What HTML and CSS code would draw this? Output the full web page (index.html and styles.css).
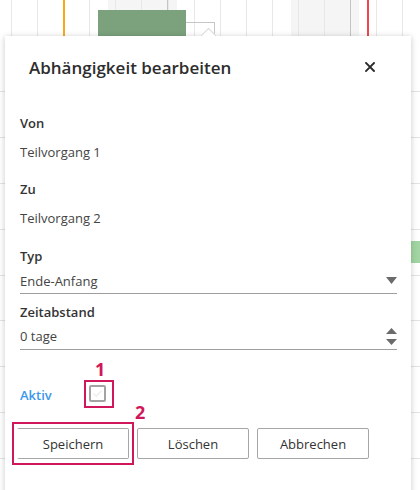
FILE: index.html
```html
<!DOCTYPE html>
<html lang="de">
<head>
<meta charset="utf-8">
<title>Abhängigkeit bearbeiten</title>
<link rel="stylesheet" href="styles.css">
</head>
<body>
<div class="gantt">
  <div class="gantt-band band-a"></div>
  <div class="gantt-band band-b"></div>
  <div class="gantt-cols">
    <i></i><i></i><i></i><i></i><i></i><i></i><i></i><i></i><i></i><i></i><i></i><i></i><i></i><i></i><i></i><i></i><i></i><i></i>
  </div>
  <div class="gantt-rows">
    <i></i><i></i><i></i><i></i><i></i><i></i><i></i><i></i><i></i><i></i>
  </div>
  <div class="gantt-sep sep-a"></div>
  <div class="gantt-sep sep-b"></div>
  <div class="gantt-marker marker-start"></div>
  <div class="gantt-marker marker-end"></div>
  <div class="gantt-bar bar-summary"></div>
  <div class="gantt-bar bar-task"></div>
  <div class="gantt-link link-h"></div>
  <div class="gantt-link link-v"></div>

  <div class="dialog">
    <span class="dialog-pointer"></span>
    <header class="dialog-header">
      <h2 class="dialog-title">Abhängigkeit bearbeiten</h2>
      <button class="dialog-close" type="button" aria-label="Schließen">
        <svg width="10" height="10" viewBox="0 0 10 10"><path d="M1 1L9 9M9 1L1 9" stroke="#2b2b2b" stroke-width="1.9" stroke-linecap="square"/></svg>
      </button>
    </header>
    <div class="dialog-body">
      <div class="field">
        <div class="field-label">Von</div>
        <div class="field-text">Teilvorgang 1</div>
      </div>
      <div class="field field-gap">
        <div class="field-label">Zu</div>
        <div class="field-text">Teilvorgang 2</div>
      </div>
      <div class="field field-gap-l">
        <div class="field-label">Typ</div>
        <div class="field-input field-input-select">
          <span>Ende-Anfang</span>
          <svg class="select-arrow" width="11" height="7" viewBox="0 0 11 7"><path d="M0 0H11L5.5 7Z" fill="#6b6b6b"/></svg>
        </div>
      </div>
      <div class="field field-gap-s">
        <div class="field-label">Zeitabstand</div>
        <div class="field-input field-input-number">
          <span>0 tage</span>
          <span class="spinner">
            <svg width="11" height="6" viewBox="0 0 11 6"><path d="M0 6H11L5.5 0Z" fill="#6b6b6b"/></svg>
            <svg width="11" height="6" viewBox="0 0 11 6"><path d="M0 0H11L5.5 6Z" fill="#6b6b6b"/></svg>
          </span>
        </div>
      </div>
      <div class="check-row">
        <span class="check-label">Aktiv</span>
        <span class="checkbox">
          <svg width="13" height="13" viewBox="0 0 13 13"><path d="M2.5 6.5L5.2 9.2L10.5 3.8" fill="none" stroke="#eeeeee" stroke-width="1.5"/></svg>
        </span>
      </div>
      <div class="actions">
        <button class="btn btn-save" type="button">Speichern</button>
        <button class="btn" type="button">Löschen</button>
        <button class="btn" type="button">Abbrechen</button>
      </div>
    </div>
    <span class="callout-box callout-box-1"></span>
    <span class="callout-num callout-num-1">1</span>
    <span class="callout-box callout-box-2"></span>
    <span class="callout-num callout-num-2">2</span>
  </div>
</div>
</body>
</html>
```

FILE: styles.css
```css
* { box-sizing: border-box; }

html, body {
  margin: 0;
  padding: 0;
}

body {
  width: 420px;
  height: 490px;
  overflow: hidden;
  background: #fff;
  font-family: "Segoe UI", "Open Sans", "Noto Sans", sans-serif;
  font-size: 13px;
  color: #333;
}

/* ---------- Gantt background ---------- */
.gantt {
  position: relative;
  width: 420px;
  height: 490px;
  overflow: hidden;
  background: #fff;
}

.gantt-band {
  position: absolute;
  top: 0;
  bottom: 0;
  background: #f5f5f5;
}
.band-a { left: 108px; width: 69px; }
.band-b { left: 291px; width: 68px; }

.gantt-cols {
  position: absolute;
  top: 0;
  bottom: 0;
  left: -14.1px;
  display: flex;
}
.gantt-cols i {
  flex: 0 0 26.1px;
  border-right: 1px solid #e8e8e8;
}

.gantt-rows {
  position: absolute;
  left: 0;
  right: 0;
  top: 46.1px;
  display: flex;
  flex-direction: column;
}
.gantt-rows i {
  flex: 0 0 45.9px;
  border-bottom: 1px solid #e3e3e3;
}

.gantt-sep {
  position: absolute;
  top: 0;
  bottom: 0;
  width: 1px;
  background: #c4c4c4;
}
.sep-a { left: 167px; }
.sep-b { left: 350px; }

.gantt-marker {
  position: absolute;
  top: 0;
  bottom: 0;
  width: 2px;
}
.marker-start { left: 63px; background: #f6a91b; }
.marker-end { left: 367px; background: #f0474f; }

.gantt-bar { position: absolute; }
.bar-summary {
  left: 98px;
  top: 10px;
  width: 88px;
  height: 30px;
  background: #7ba27c;
}
.bar-task {
  left: 330px;
  top: 241px;
  width: 100px;
  height: 22px;
  background: #a2d5a3;
}

.gantt-link {
  position: absolute;
  background: #c6c6c6;
}
.link-h { left: 186px; top: 22px; width: 29px; height: 1px; }
.link-v { left: 214px; top: 22px; width: 1px; height: 18px; }

/* ---------- Dialog ---------- */
.dialog {
  position: absolute;
  left: 5px;
  top: 36px;
  width: 406px;
  height: 460px;
  background: #fff;
  box-shadow: 0 1px 6px rgba(0, 0, 0, 0.22);
}

.dialog-pointer {
  position: absolute;
  left: 198px;
  top: -6px;
  width: 11px;
  height: 11px;
  background: #fff;
  border-top: 1px solid #dadada;
  border-left: 1px solid #dadada;
  transform: rotate(45deg);
}

.dialog-header {
  display: flex;
  align-items: center;
  justify-content: space-between;
  height: 44px;
  padding: 20px 36px 0 24px;
}

.dialog-title {
  margin: 0;
  font-size: 17px;
  font-weight: 600;
  line-height: 24px;
  color: #2d2d2d;
}

.dialog-close {
  display: flex;
  width: 10px;
  height: 10px;
  padding: 0;
  margin-top: -2px;
  border: 0;
  background: none;
}

.dialog-body {
  padding: 33px 14px 0 15px;
}

.field-label {
  line-height: 20px;
  font-weight: 600;
  color: #333;
}

.field-text {
  margin-top: 9px;
  line-height: 20px;
  color: #444;
}

.field-gap { margin-top: 17px; }
.field-gap-l { margin-top: 18px; }
.field-gap-s { margin-top: 8px; }

.field-input {
  display: flex;
  align-items: flex-start;
  justify-content: space-between;
  margin-top: 5px;
  line-height: 20px;
  padding-bottom: 2px;
  border-bottom: 1px solid #9e9e9e;
  color: #444;
}

.field-input-number {
  margin-top: 4px;
  padding-bottom: 3px;
}

.select-arrow {
  margin-top: 6px;
}

.spinner {
  display: flex;
  flex-direction: column;
  gap: 5px;
  margin-top: 2px;
}
.spinner svg { display: block; }

.check-row {
  display: flex;
  align-items: flex-start;
  margin-top: 35px;
}

.check-label {
  width: 69px;
  line-height: 20px;
  font-weight: 600;
  color: #3a97ec;
}

.checkbox {
  display: flex;
  align-items: center;
  justify-content: center;
  width: 17px;
  height: 17px;
  border: 2px solid #a3a3a3;
  border-radius: 2px;
  background: #fff;
}

.actions {
  display: flex;
  gap: 8px;
  margin-top: 23px;
  margin-left: -3px;
}

.btn {
  width: 112px;
  height: 31px;
  padding: 0;
  border: 1px solid #a6a6a6;
  border-radius: 2px;
  background: #fff;
  font-family: inherit;
  font-size: 13px;
  font-weight: 500;
  color: #333;
}

.btn-save { border-left-color: transparent; }

/* ---------- Annotations ---------- */
.callout-box {
  position: absolute;
  border: 2px solid #d1175b;
}
.callout-box-1 { left: 79px; top: 344px; width: 30px; height: 28px; }
.callout-box-2 { left: 7px; top: 386px; width: 122px; height: 43px; }

.callout-num {
  position: absolute;
  font-size: 18px;
  font-weight: 700;
  line-height: 18px;
  color: #d1175b;
}
.callout-num-1 { left: 90px; top: 324px; }
.callout-num-2 { left: 130px; top: 367px; }
```
